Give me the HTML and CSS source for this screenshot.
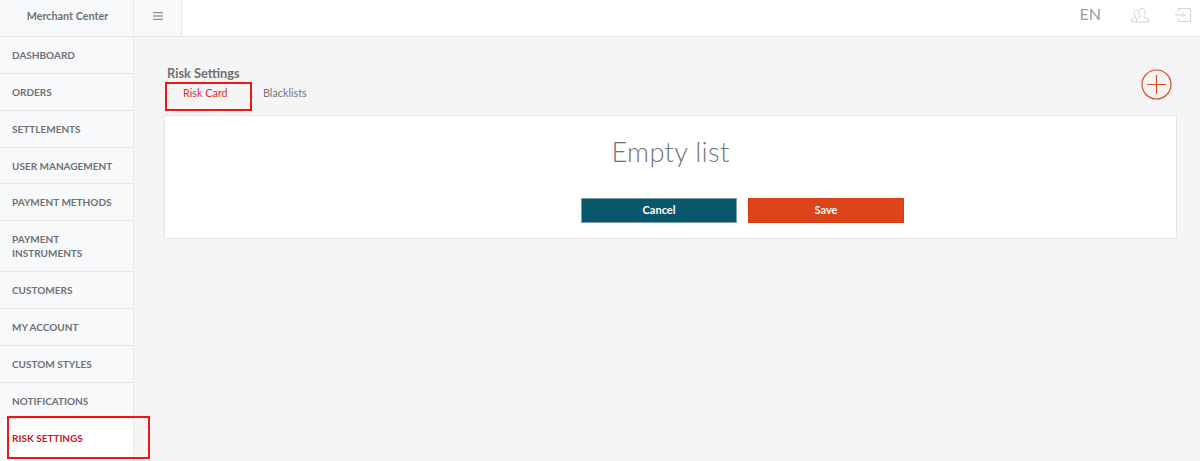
FILE: index.html
```html
<!DOCTYPE html>
<html lang="en">
<head>
<meta charset="utf-8">
<title>Risk Settings</title>
<link rel="stylesheet" href="styles.css">
</head>
<body>
<header class="topbar">
  <div class="brand">Merchant Center</div>
  <button class="burger" aria-label="Menu">
    <svg width="10" height="8" viewBox="0 0 10 8"><path d="M0 .75h10M0 4h10M0 7.25h10" stroke="#6d7277" stroke-width="1.2" fill="none"/></svg>
  </button>
  <div class="top-actions">
    <span class="lang">EN</span>
    <svg class="top-icon" width="18" height="15" viewBox="0 0 18 15" fill="none" stroke="#d2d4d5" stroke-width="1"><path d="M11 .6c2.200 0 3.300 1.500 3.300 3.500 0 1.500-.6 2.800-1.400 3.600v1.400c1.500.6 3.200 1 4.600 2.100v2.800H5.500v-2.800c1.200-1 2.800-1.500 3.600-2.100V7.700C8.300 6.900 7.700 5.600 7.700 4.100c0-2 1.100-3.500 3.300-3.500z"/><path d="M6.300 1.500C3.900 1.500 3 3.100 3 4.800c0 1.300.5 2.500 1.300 3.200v1.300C3 9.900 1.500 10.300.5 11.300v2.400h5"/></svg>
    <svg class="top-icon" width="16" height="14" viewBox="0 0 16 14" fill="none" stroke="#d2d4d5" stroke-width="1"><path d="M3.500 3.500V.5h12v13h-12v-3"/><path d="M0 7h9.500M7 4.200 9.800 7 7 9.800"/></svg>
  </div>
</header>
<div class="layout">
  <nav class="sidebar">
    <a class="nav-item">DASHBOARD</a>
    <a class="nav-item">ORDERS</a>
    <a class="nav-item">SETTLEMENTS</a>
    <a class="nav-item">USER MANAGEMENT</a>
    <a class="nav-item">PAYMENT METHODS</a>
    <a class="nav-item">PAYMENT<br>INSTRUMENTS</a>
    <a class="nav-item">CUSTOMERS</a>
    <a class="nav-item">MY ACCOUNT</a>
    <a class="nav-item">CUSTOM STYLES</a>
    <a class="nav-item">NOTIFICATIONS</a>
    <a class="nav-item nav-active">RISK SETTINGS<span class="mark mark-nav"></span></a>
  </nav>
  <main class="content">
    <div class="head-row">
      <div>
        <h1 class="title">Risk Settings</h1>
        <div class="tabs">
          <a class="tab tab-active">Risk Card<span class="mark mark-tab"></span></a>
          <a class="tab">Blacklists</a>
        </div>
      </div>
      <button class="add" aria-label="Add">
        <svg width="31" height="31" viewBox="0 0 31 31" fill="none" stroke="#e0492a" stroke-width="1.2"><circle cx="15.500" cy="15.500" r="14.500"/><path d="M15.500 6v19M6 15.500h19"/></svg>
      </button>
    </div>
    <section class="panel">
      <h2 class="empty">Empty list</h2>
      <div class="actions">
        <button class="btn btn-cancel">Cancel</button>
        <button class="btn btn-save">Save</button>
      </div>
    </section>
  </main>
</div>
</body>
</html>
```
FILE: styles.css
```css
* { box-sizing: border-box; }
html, body { margin: 0; height: 461px; overflow: hidden; }
body { font-family: Lato, "Liberation Sans", sans-serif; background: #f5f5f5; color: #666a6e; }
.topbar { display: flex; height: 37px; background: #fff; border-bottom: 1px solid #e6e6e6; }
.brand { width: 134px; padding-left: 2px; background: #f8f9fa; border-right: 1px solid #e9eaeb; text-align: center; font-size: 10.800px; font-weight: 700; line-height: 31px; color: #6e7276; }
.burger { width: 48px; height: 36px; padding: 0 0 6px; border: 0; border-right: 1px solid #e9eaeb; background: #f8f9fa; }
.top-actions { margin-left: auto; display: flex; align-items: center; padding: 0 9px 6px 0; }
.lang { margin: 0 30px 3px 0; font-size: 16px; color: #9a9da0; }
.top-icon { margin-right: 26px; }
.top-icon:last-child { margin-right: 0; }
.layout { display: flex; height: 424px; }
.sidebar { width: 134px; flex: none; background: #f8f9fa; border-right: 1px solid #e9eaeb; }
.nav-item { position: relative; display: block; padding: 11px 0 10.850px 12px; border-bottom: 1px solid #e6e7e8; font-size: 10px; font-weight: 700; line-height: 14px; color: #6e7276; }
.nav-item:last-child { border-bottom: 0; }
.nav-active { padding-top: 12px; background: #fff; color: #c8201c; height: 41.500px; }
.mark { position: absolute; border: 2px solid #f01414; pointer-events: none; }
.mark-nav { left: 7px; top: -3.500px; width: 143px; height: 43px; }
.mark-tab { left: 0; top: 0; width: 87px; height: 29px; }
.content { flex: 1; padding: 29px 23px 0 30px; min-width: 0; }
.head-row { display: flex; justify-content: space-between; align-items: flex-start; height: 49px; }
.title { margin: 0 0 0 3px; font-size: 12.800px; font-weight: 700; line-height: 15px; color: #6e7276; }
.tabs { display: flex; margin-left: 1px; margin-top: 1px; }
.tab { position: relative; width: 87px; height: 29px; padding: 3px 0 0 18px; font-size: 10.800px; line-height: 15px; color: #73777b; }
.tab + .tab { width: auto; padding-left: 11px; }
.tab-active { color: #dc2f2f; }
.add { width: 31px; height: 31px; margin: 3px 5px 0 0; padding: 0; border: 0; background: none; }
.add svg { display: block; }
.panel { height: 124px; background: #fff; border: 1px solid #e6e6e6; }
.empty { margin: 18px 0 0; text-align: center; font-size: 27.300px; font-weight: 300; line-height: 36px; color: #717578; letter-spacing: .3px; }
.actions { display: flex; gap: 11px; margin: 28px 0 0 416px; }
.btn { width: 156px; height: 25px; padding: 0 0 2px; font: 700 11px Lato, "Liberation Sans", sans-serif; color: #fff; border-style: solid; border-width: 1px; }
.btn-cancel { background: #08576d; border-color: #7f9fac; }
.btn-save { background: #dc4519; border-color: #d93a10; }
```
